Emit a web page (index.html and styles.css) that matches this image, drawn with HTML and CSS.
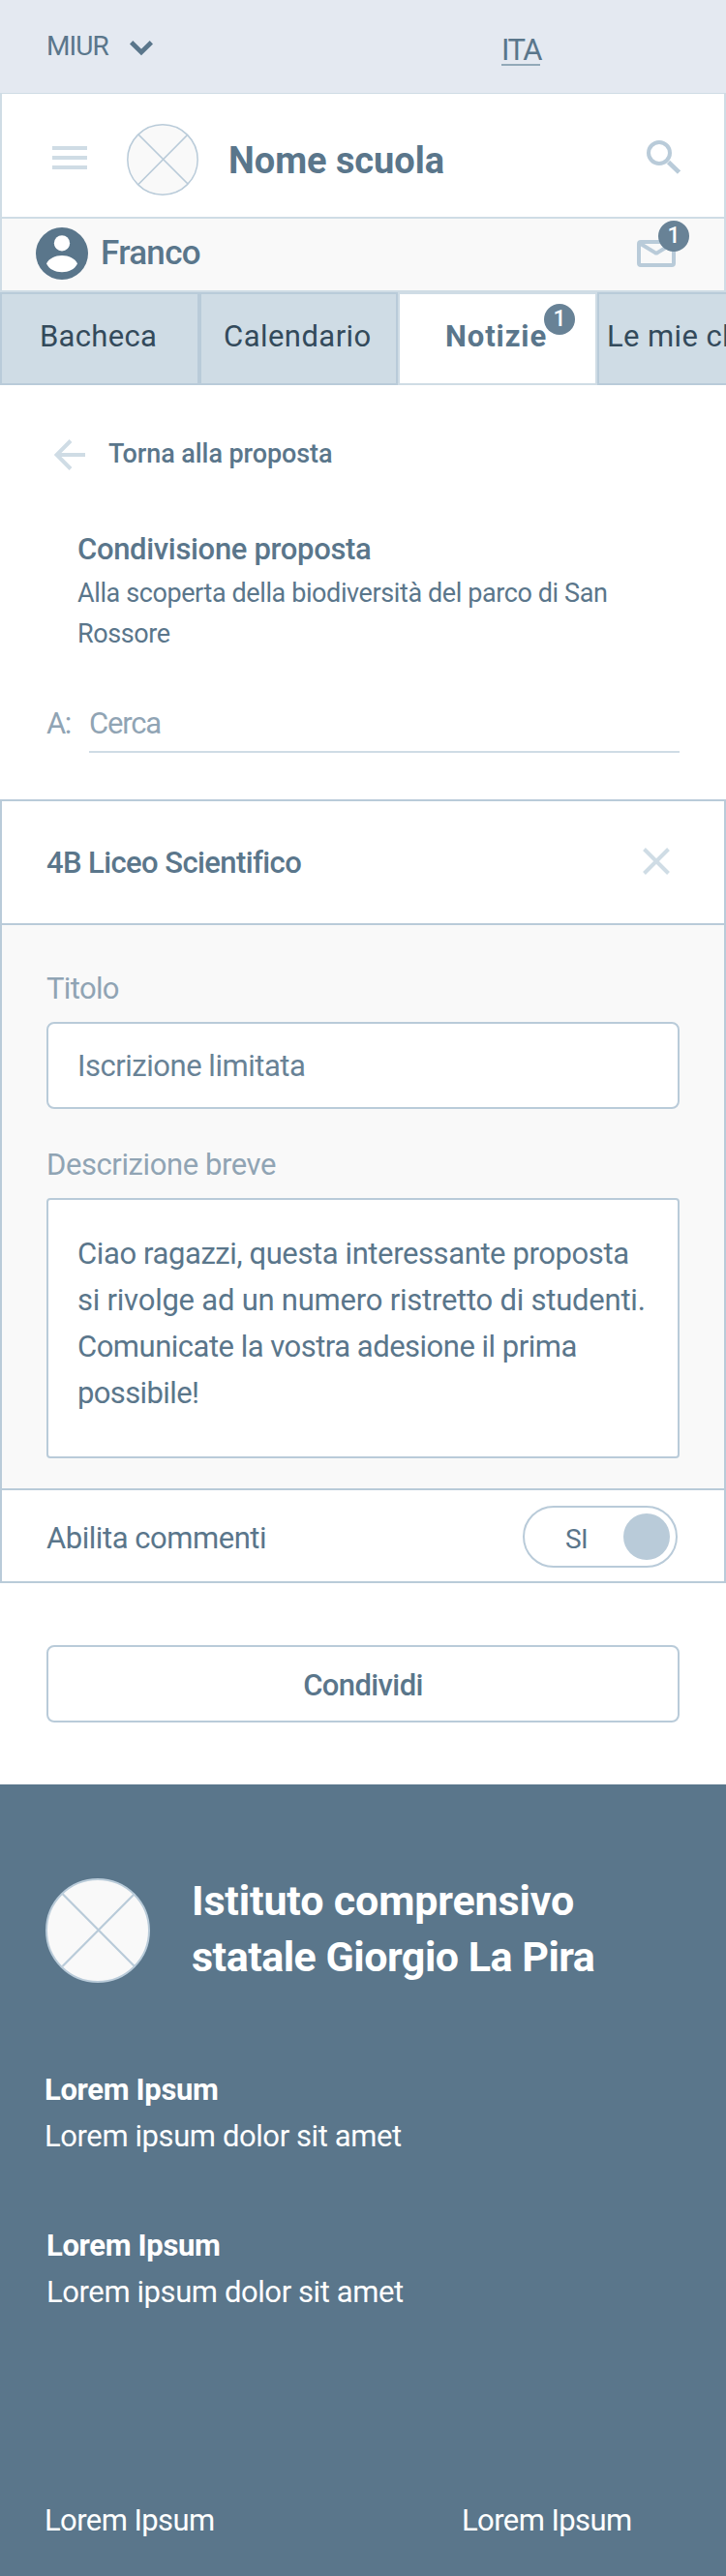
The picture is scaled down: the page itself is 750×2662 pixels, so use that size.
FILE: index.html
```html
<!DOCTYPE html>
<html lang="it">
<head>
<meta charset="utf-8">
<title>Condivisione proposta</title>
<link rel="stylesheet" href="styles.css">
</head>
<body>
<div class="page">
  <div class="topbar">
    <a class="miur">MIUR</a>
    <svg class="chevron" width="24" height="16" viewBox="0 0 24 16"><path d="M1.600 1.800 12 12 22.400 1.800" fill="none" stroke="#5a768b" stroke-width="4.800"/></svg>
    <a class="lang">ITA</a>
  </div>

  <header class="header">
    <svg class="menu" width="36" height="24" viewBox="0 0 36 24"><path d="M0 2H36M0 12H36M0 22H36" stroke="#cfdce5" stroke-width="4"/></svg>
    <svg class="logo" width="74" height="74" viewBox="0 0 74 74"><circle cx="37" cy="37" r="36.2" fill="#f9f9f9" stroke="#b9cbd9" stroke-width="1.5"/><path d="M12 11 63 62M62.500 11.500 12 62.500" stroke="#b9cbd9" stroke-width="1.7"/></svg>
    <h1 class="school">Nome scuola</h1>
    <svg class="search" width="35" height="35" viewBox="0 0 35 35"><circle cx="13" cy="13" r="11" fill="none" stroke="#b9cbd9" stroke-width="4"/><path d="M22.500 22.500 33.500 33" stroke="#b9cbd9" stroke-width="4.600"/></svg>
  </header>

  <div class="userbar">
    <svg class="avatar" width="54" height="54" viewBox="0 0 54 54"><circle cx="27" cy="27" r="27" fill="#5a768b"/><circle cx="27" cy="16.300" r="8.100" fill="#fff"/><path d="M11 37.500C13.500 32 20 29 27 29s13.500 3 16 8.500C40 43.500 34 46.200 27 46.200S14 43.500 11 37.500Z" fill="#fff"/></svg>
    <span class="user">Franco</span>
    <span class="mail">
      <svg width="40" height="28" viewBox="0 0 40 28"><rect x="2" y="2" width="36" height="24" rx="2" fill="none" stroke="#b9cbd9" stroke-width="4"/><path d="M3 3.500 18.800 13.100Q20 14 21.200 13.100L37 3.500" fill="none" stroke="#b9cbd9" stroke-width="4"/></svg>
      <span class="badge badge-mail">1</span>
    </span>
  </div>

  <nav class="tabs">
    <a class="tab bacheca">Bacheca</a>
    <a class="tab calendario">Calendario</a>
    <a class="tab active">Notizie<span class="badge badge-tab">1</span></a>
    <a class="tab classi">Le mie classi</a>
  </nav>

  <main>
    <div class="back">
      <svg width="32" height="32" viewBox="0 0 32 32"><path d="M17 1.500 2.500 16 17 30.500M2.500 16H32" fill="none" stroke="#cfdce5" stroke-width="4"/></svg>
      <a class="back-text">Torna alla proposta</a>
    </div>
    <section class="intro">
      <h2 class="intro-title">Condivisione proposta</h2>
      <p class="intro-text">Alla scoperta della biodiversità del parco di San<br>Rossore</p>
    </section>
    <div class="to">
      <span class="to-label">A:</span>
      <div class="to-field">Cerca</div>
    </div>

    <section class="card">
      <div class="card-head">
        <h3 class="card-title">4B Liceo Scientifico</h3>
        <svg width="28" height="28" viewBox="0 0 28 28"><path d="M1.500 1.500 26.500 26.500M26.500 1.500 1.500 26.500" stroke="#cfdce5" stroke-width="4"/></svg>
      </div>
      <div class="card-body">
        <label class="label titolo">Titolo</label>
        <div class="input">Iscrizione limitata</div>
        <label class="label descr">Descrizione breve</label>
        <div class="textarea"><span class="l1">Ciao ragazzi, questa interessante proposta</span><span class="l2">si rivolge ad un numero ristretto di studenti.</span><span class="l3">Comunicate la vostra adesione il prima</span><span class="l4">possibile!</span></div>
      </div>
      <div class="card-foot">
        <span class="comments">Abilita commenti</span>
        <div class="toggle"><span>SI</span><i class="knob"></i></div>
      </div>
    </section>
    <div class="actions"><a class="share">Condividi</a></div>
  </main>

  <footer class="footer">
    <div class="institute">
      <svg width="108" height="108" viewBox="0 0 108 108"><circle cx="54" cy="54" r="53" fill="#f9f9f9" stroke="#b9cbd9" stroke-width="2"/><path d="M17.500 16 92 91M92 16 17.500 91" stroke="#b9cbd9" stroke-width="2.200"/></svg>
      <h2 class="institute-name"><span class="n1">Istituto comprensivo</span><span class="n2">statale Giorgio La Pira</span></h2>
    </div>
    <div class="info first"><b>Lorem Ipsum</b><span>Lorem ipsum dolor sit amet</span></div>
    <div class="info second"><b>Lorem Ipsum</b><span>Lorem ipsum dolor sit amet</span></div>
    <div class="links"><a>Lorem Ipsum</a><a>Lorem Ipsum</a></div>
  </footer>
</div>
</body>
</html>
```
FILE: styles.css
```css
* { box-sizing: border-box; margin: 0; padding: 0; }
body {
  width: 750px;
  font-family: Roboto, "Liberation Sans", sans-serif;
  font-size: 31px;
  line-height: 47px;
  letter-spacing: -0.45px;
  color: #5a768b;
  background: #fff;
  white-space: nowrap;
}
svg { display: block; flex: none; }
.page { height: 2662px; overflow: hidden; display: flex; flex-direction: column; }

/* top bar */
.topbar { display: flex; align-items: flex-start; height: 96px; padding-left: 48px; background: #e4e9f1; }
.miur { width: 86px; margin-top: 31px; font-size: 28px; line-height: 33px; letter-spacing: -0.9px; }
.chevron { margin-top: 42px; }
.lang { width: 40px; margin: 37px 0 0 360px; line-height: 29px; letter-spacing: -1.5px; border-bottom: 2px solid #92a9b8; }

/* header */
.header { display: flex; height: 130px; padding-left: 52px; border: 2px solid #cfdce5; border-top-width: 1px; }
.menu { margin-top: 54px; }
.logo { margin: 31px 0 0 41px; }
.school { width: 432px; margin: 45px 0 0 31px; font-size: 38px; line-height: 48px; letter-spacing: -0.05px; }
.search { margin-top: 48px; }

/* user bar */
.userbar { display: flex; height: 76px; padding-left: 35px; background: #f9f9f9; border: 2px solid #cfdce5; border-top: 0; }
.avatar { margin-top: 9px; }
.user { width: 554px; margin: 12px 0 0 13px; font-size: 35px; line-height: 48px; font-weight: 500; letter-spacing: -0.7px; }
.mail { position: relative; height: 28px; margin-top: 22px; }
.badge {
  position: absolute;
  width: 32px; height: 32px;
  border-radius: 50%;
  background: #688296;
  color: #fff;
  font-size: 23px; line-height: 32px; font-weight: 500;
  letter-spacing: 0;
  text-align: center;
}
.badge-mail { left: 22px; top: -20px; }
.badge-tab { left: 149px; top: 10px; }

/* tabs */
.tabs { display: flex; height: 96px; }
.tab { flex: none; width: 206px; padding-top: 20px; line-height: 48px; color: #334a5b; background: #cfdce5; border: 2px solid #b9cbd9; }
.bacheca { padding-left: 39px; letter-spacing: 0.3px; }
.calendario { width: 205px; padding-left: 23px; letter-spacing: 0.45px; }
.active { position: relative; padding-left: 47px; color: #5a768b; background: #fff; border-color: #cfdce5; font-weight: 700; letter-spacing: 0.9px; }
.classi { padding-left: 8px; letter-spacing: 0.4px; }

/* back link, intro, recipient */
.back { display: flex; margin: 56px 0 0 56px; }
.back-text { margin: -2px 0 0 24px; font-size: 27px; line-height: 34px; font-weight: 500; letter-spacing: -0.08px; }
.intro { margin: 58px 0 0 80px; }
.intro-title { font-size: 31px; line-height: 47px; font-weight: 500; letter-spacing: -0.33px; }
.intro-text { margin-top: 1px; font-size: 27px; line-height: 42px; letter-spacing: -0.4px; }
.to { display: flex; height: 54px; margin: 48px 0 0 48px; color: #90a4b4; }
.to-label { width: 44px; letter-spacing: -1.5px; }
.to-field { width: 610px; border-bottom: 2px solid #cfdce5; letter-spacing: -1.2px; }

/* card */
.card { height: 810px; margin-top: 48px; border: 2px solid #b9cbd9; }
.card-head { display: flex; justify-content: space-between; height: 128px; padding: 40px 56px 0 46px; border-bottom: 2px solid #b9cbd9; }
.card-title { font-size: 31px; font-weight: 500; letter-spacing: -0.6px; }
.card-head svg { margin-top: 8px; }
.card-body { height: 584px; padding: 42px 46px 0; background: #f9f9f9; border-bottom: 2px solid #b9cbd9; }
.label { display: block; color: #90a4b4; }
.titolo { letter-spacing: -0.65px; }
.input { height: 90px; margin-top: 11px; padding: 20px 0 0 30px; background: #fff; border: 2px solid #b9cbd9; border-radius: 8px; color: #688296; letter-spacing: -0.47px; }
.descr { margin-top: 34px; letter-spacing: -0.41px; }
.textarea { display: flex; flex-direction: column; height: 269px; margin-top: 11px; padding: 32px 0 0 30px; background: #fff; border: 2px solid #b9cbd9; border-radius: 4px; line-height: 48px; }
.l1 { letter-spacing: -0.4px; }
.l2 { letter-spacing: -0.23px; }
.l3 { letter-spacing: -0.5px; }
.l4 { letter-spacing: -0.62px; }
.card-foot { display: flex; justify-content: space-between; padding: 16px 48px 0 46px; }
.comments { margin-top: 10px; letter-spacing: -0.46px; }
.toggle { display: flex; justify-content: space-between; width: 160px; height: 64px; padding: 6px 6px 0 42px; border: 2px solid #b9cbd9; border-radius: 32px; font-size: 28px; line-height: 53px; letter-spacing: -0.63px; }
.knob { width: 48px; height: 48px; border-radius: 50%; background: #b9cbd9; }
.actions { padding: 64px 48px; }
.share { display: block; height: 80px; padding-top: 16px; border: 2px solid #b9cbd9; border-radius: 8px; text-align: center; font-weight: 500; letter-spacing: -0.6px; }

/* footer */
.footer { flex: 1; color: #fff; background: #5a768b; padding: 97px 47px 0; }
.institute { display: flex; }
.institute-name { display: flex; flex-direction: column; margin: -6px 0 0 43px; font-size: 43px; line-height: 58px; }
.n1 { letter-spacing: -0.15px; }
.n2 { letter-spacing: -0.5px; }
.info { display: flex; flex-direction: column; line-height: 48px; letter-spacing: -0.41px; }
.info b { letter-spacing: -0.34px; }
.first { margin-top: 85px; margin-left: -1px; }
.second { margin-top: 65px; margin-left: 1px; }
.links { display: grid; grid-template-columns: 431px auto; margin: 188px 0 0 -1px; line-height: 48px; letter-spacing: -0.58px; }
```
